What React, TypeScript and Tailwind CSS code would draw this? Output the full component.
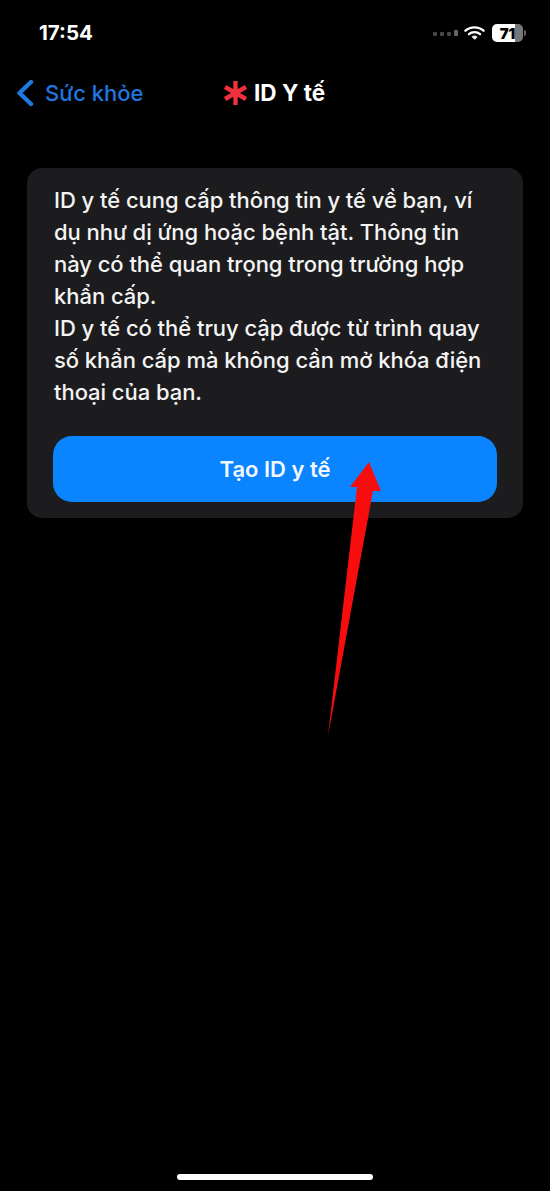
const font = "font-['Inter','Noto_Sans',sans-serif]";

function StatusIcons() {
  return (
    <div className="flex items-center">
      <div className="flex items-end gap-[3px] opacity-60">
        <span className="h-[4px] w-[4px] rounded-[1px] bg-[#777]" />
        <span className="h-[4px] w-[4px] rounded-[1px] bg-[#777]" />
        <span className="h-[4px] w-[4px] rounded-[1px] bg-[#777]" />
        <span className="h-[6px] w-[4px] rounded-[1px] bg-[#aaa]" />
      </div>
      <svg width="21" height="16" viewBox="0 0 22 16" className="ml-[6px]" fill="none" stroke="#fff" strokeLinecap="round">
        <path d="M1.5 5.6C6.7 0.8 15.3 0.8 20.5 5.6" strokeWidth="2.4" />
        <path d="M5.2 9.2C8.3 6.4 13.7 6.4 16.8 9.2" strokeWidth="2.4" />
        <path d="M11 14.4L8.6 12C10 10.9 12 10.9 13.4 12Z" fill="#fff" strokeWidth="1" />
      </svg>
      <div className="ml-[7px] flex h-[18px] w-[31px] items-center justify-center overflow-hidden rounded-[5px] bg-[linear-gradient(90deg,#fff_0%,#fff_74%,#777_74%,#777_100%)]">
        <span className="text-[15px] leading-none font-black text-black">71</span>
      </div>
      <span className="ml-[1px] h-[6px] w-[2px] rounded-r-sm bg-[#666]" />
    </div>
  );
}

export default function App() {
  return (
    <main className={`relative flex h-[1191px] w-[550px] flex-col overflow-hidden bg-black text-white ${font}`}>
      <header className="flex h-[66px] items-center justify-between pr-[24px] pl-[39px]">
        <span className="text-[20.5px] font-bold">17:54</span>
        <StatusIcons />
      </header>

      <nav className="relative flex h-[54px] items-center pl-[15px]">
        <svg width="20" height="28" viewBox="0 0 20 28" fill="none" stroke="#1f78e0" strokeWidth="4.4" strokeLinecap="round" strokeLinejoin="round">
          <path d="M16 3L4.5 14L16 25" />
        </svg>
        <span className="ml-[10px] text-[22px] font-medium text-[#1f78e0]">Sức khỏe</span>
        <div className="absolute top-0 left-[223px] flex h-full items-center">
          <svg width="25" height="26" viewBox="0 0 25 26" stroke="#f0303c" strokeWidth="4.4">
            <path d="M12.5 1V25M2 7L23 19M23 7L2 19" />
          </svg>
          <span className="ml-[6px] text-[22.5px] font-bold">ID Y tế</span>
        </div>
      </nav>

      <section className="mx-[27px] mt-[48px] flex h-[350px] flex-col rounded-[15px] bg-[#1c1c1e] px-[26px] pt-[16px]">
        <p className="pl-[1px] text-[22px] leading-[32px] font-[450] tracking-[-0.05px] text-[#f4f4f4]">
          ID y tế cung cấp thông tin y tế về bạn, ví
          <br />
          dụ như dị ứng hoặc bệnh tật. Thông tin
          <br />
          này có thể quan trọng trong trường hợp
          <br />
          khẩn cấp.
          <br />
          ID y tế có thể truy cập được từ trình quay
          <br />
          số khẩn cấp mà không cần mở khóa điện
          <br />
          thoại của bạn.
        </p>
        <button className="mt-[28px] flex h-[66px] items-center justify-center rounded-[19px] bg-[#0a84ff] text-[22px] font-semibold text-[#f2f8ff]">
          Tạo ID y tế
        </button>
      </section>

      <svg width="60" height="280" viewBox="0 0 60 280" className="absolute top-[460px] left-[325px]">
        <path d="M44 2L25 27L32 27L3 276L48 31L56 31Z" fill="#f70d0d" />
      </svg>

      <div className="mt-auto mb-[11px] h-[6px] w-[196px] self-center rounded-full bg-white" />
    </main>
  );
}
